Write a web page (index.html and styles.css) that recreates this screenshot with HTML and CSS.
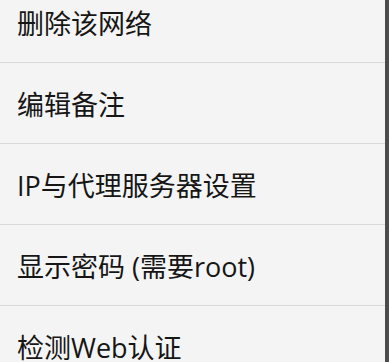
FILE: index.html
```html
<!DOCTYPE html>
<html lang="zh">
<head>
<meta charset="utf-8">
<link rel="stylesheet" href="styles.css">
</head>
<body>
<div class="screen">
  <ul class="menu">
    <li class="item">删除该网络</li>
    <li class="item">编辑备注</li>
    <li class="item">IP与代理服务器设置</li>
    <li class="item">显示密码 (需要root)</li>
    <li class="item">检测Web认证</li>
  </ul>
  <div class="edge"></div>
</div>
</body>
</html>
```
FILE: styles.css
```css
html, body {
  margin: 0;
  padding: 0;
  background: #f4f4f4;
}
.screen {
  display: flex;
  width: 389px;
  height: 362px;
  overflow: hidden;
}
.menu {
  flex: 1;
  list-style: none;
  margin: -18px 0 0 0;
  padding: 0;
}
.item {
  height: 80px;
  border-bottom: 1.5px solid #dadada;
  display: flex;
  align-items: center;
  padding-left: 17px;
  font-family: "Open Sans", "Noto Sans CJK SC", sans-serif;
  font-size: 27px;
  color: #161616;
  box-sizing: content-box;
}
.edge {
  width: 4px;
  background: #4c4c4c;
}
```
